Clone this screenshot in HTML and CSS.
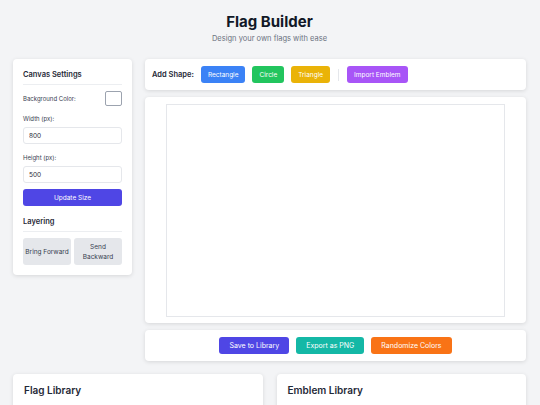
FILE: index.html
```html
<!DOCTYPE html>
<html lang="en">
<head>
  <meta charset="UTF-8">
  <meta name="viewport" content="width=device-width, initial-scale=1.0">
  <title>Flag Builder</title>
  <link rel="stylesheet" href="styles.css">
</head>
<body>
  <header class="header">
    <h1 class="title">Flag Builder</h1>
    <p class="subtitle">Design your own flags with ease</p>
  </header>

  <div class="layout">
    <!-- Sidebar settings -->
    <aside class="card sidebar">
      <h3 class="panel-title">Canvas Settings</h3>
      <div class="color-row">
        <label class="label inline">Background Color:</label>
        <span class="swatch"></span>
      </div>
      <div class="field">
        <label class="label">Width (px):</label>
        <input class="input" type="text" value="800">
      </div>
      <div class="field">
        <label class="label">Height (px):</label>
        <input class="input" type="text" value="500">
      </div>
      <button class="btn btn-indigo btn-block">Update Size</button>

      <h3 class="panel-title layering">Layering</h3>
      <div class="layer-buttons">
        <button class="btn btn-gray">Bring Forward</button>
        <button class="btn btn-gray">Send Backward</button>
      </div>
    </aside>

    <main class="main">
      <div class="card toolbar">
        <span class="toolbar-label">Add Shape:</span>
        <button class="btn btn-blue">Rectangle</button>
        <button class="btn btn-green">Circle</button>
        <button class="btn btn-yellow">Triangle</button>
        <span class="divider"></span>
        <button class="btn btn-purple">Import Emblem</button>
      </div>

      <div class="card canvas-card">
        <div class="canvas"></div>
      </div>

      <div class="card actions">
        <button class="btn btn-indigo">Save to Library</button>
        <button class="btn btn-teal">Export as PNG</button>
        <button class="btn btn-orange">Randomize Colors</button>
      </div>
    </main>
  </div>

  <div class="libraries">
    <section class="card library">
      <h2 class="library-title">Flag Library</h2>
    </section>
    <section class="card library">
      <h2 class="library-title">Emblem Library</h2>
    </section>
  </div>
</body>
</html>
```

FILE: styles.css
```css
body {
  margin: 0;
  padding: 12px 14px 0 13px;
  background: #f3f4f6;
  font-family: 'Inter', 'Liberation Sans', sans-serif;
  color: #1f2937;
}

.header {
  text-align: center;
  margin-bottom: 14px;
}

.title {
  margin: 0;
  font-size: 15px;
  line-height: 20px;
  font-weight: 700;
  color: #111827;
}

.subtitle {
  margin: 1px 0 0;
  font-size: 7.5px;
  line-height: 12px;
  color: #6b7280;
}

.card {
  background: #fff;
  border-radius: 4px;
  box-shadow: 0 1px 4px rgba(0, 0, 0, 0.12);
}

.layout {
  display: grid;
  grid-template-columns: 119px 1fr;
  gap: 13px;
  align-items: start;
}

/* Sidebar */
.sidebar {
  padding: 10px;
}

.panel-title {
  margin: 0;
  font-size: 7.5px;
  line-height: 12px;
  font-weight: 600;
  padding-bottom: 3px;
  border-bottom: 1px solid #eceef1;
}

.panel-title.layering {
  margin-top: 10px;
}

.color-row {
  display: flex;
  justify-content: space-between;
  align-items: center;
  margin-top: 6px;
  height: 14px;
}

.swatch {
  width: 15px;
  height: 13px;
  border: 1px solid #9ca3af;
  border-radius: 2px;
  background: #fff;
}

.label {
  display: block;
  font-size: 6px;
  line-height: 9px;
  color: #374151;
  margin-bottom: 4px;
}

.label.inline {
  margin-bottom: 0;
}

.field {
  margin-top: 9px;
}

.input {
  display: block;
  box-sizing: border-box;
  width: 100%;
  height: 17px;
  padding: 0 5px;
  border: 1px solid #e5e7eb;
  border-radius: 3px;
  font-family: inherit;
  font-size: 6.5px;
  color: #1f2937;
}

.btn {
  border: none;
  border-radius: 3px;
  font-family: inherit;
  font-size: 6.5px;
  color: #fff;
  height: 17px;
  padding: 0 7px;
  cursor: pointer;
}

.btn-block {
  display: block;
  width: 100%;
  margin-top: 6px;
}

.layer-buttons {
  display: grid;
  grid-template-columns: 1fr 1fr;
  gap: 3px;
  margin-top: 6px;
}

.btn-gray {
  background: #e5e7eb;
  color: #374151;
  height: 27px;
  padding: 0 1px;
  line-height: 10px;
}

.btn-indigo { background: #4f46e5; }
.btn-blue { background: #3b82f6; }
.btn-green { background: #22c55e; }
.btn-yellow { background: #eab308; }
.btn-purple { background: #a855f7; }
.btn-teal { background: #14b8a6; }
.btn-orange { background: #f97316; }

/* Main column */
.main {
  display: flex;
  flex-direction: column;
  gap: 7px;
}

.toolbar {
  display: flex;
  align-items: center;
  gap: 7px;
  padding: 7px;
}

.toolbar-label {
  font-size: 7.5px;
  font-weight: 600;
}

.divider {
  width: 1px;
  height: 12px;
  background: #e5e7eb;
  margin: 0 1px;
}

.canvas-card {
  display: flex;
  justify-content: center;
  padding: 7px 0 6px;
}

.canvas {
  width: 337px;
  height: 211px;
  border: 1px solid #e5e7eb;
  background: #fff;
}

.actions {
  display: flex;
  justify-content: center;
  gap: 7px;
  padding: 7px;
}

.actions .btn {
  font-size: 7px;
  padding: 0 10px;
}

/* Libraries */
.libraries {
  display: grid;
  grid-template-columns: 1fr 1fr;
  gap: 14px;
  margin-top: 13px;
}

.library {
  padding: 9px 11px;
  height: 60px;
}

.library-title {
  margin: 0;
  font-size: 10px;
  line-height: 14px;
  font-weight: 600;
}
```
